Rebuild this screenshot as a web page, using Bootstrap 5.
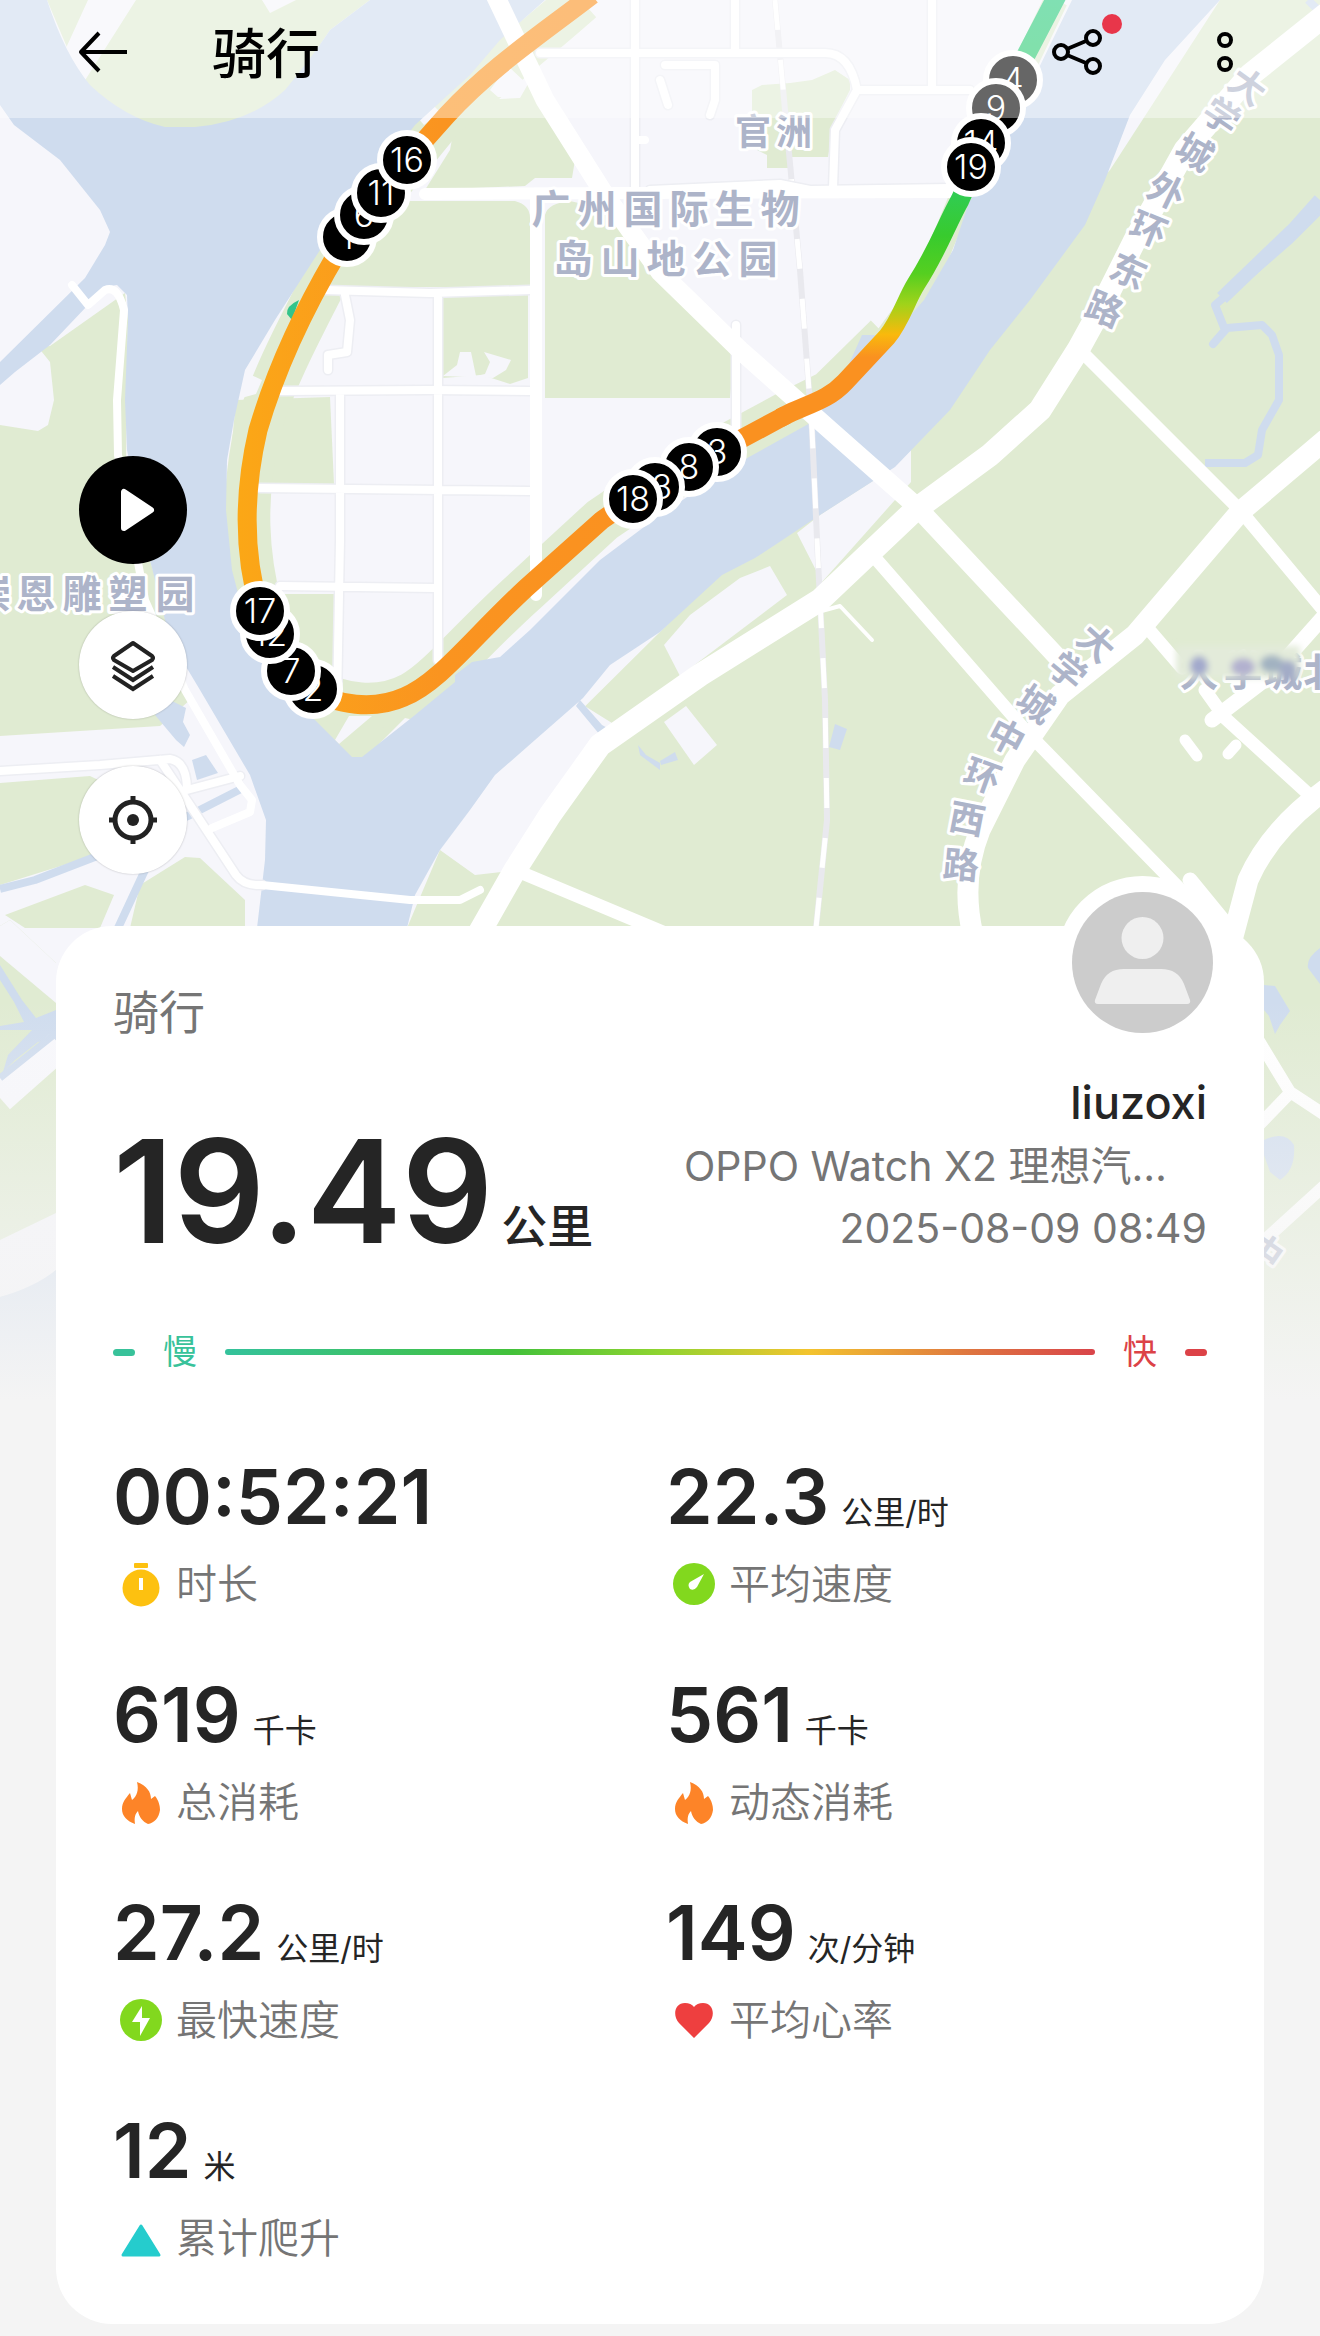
<!DOCTYPE html>
<html lang="zh-CN">
<head>
<meta charset="utf-8">
<meta name="viewport" content="width=device-width, initial-scale=1">
<title>骑行</title>
<link href="https://cdn.jsdelivr.net/npm/bootstrap@5.3.0/dist/css/bootstrap.min.css" rel="stylesheet">
<style>
  body { background: #f4f4f4; color: #252525; font-family: Inter, "Noto Sans CJK SC", sans-serif; }
  .map-canvas { top: 0; left: 0; height: 1400px; }
  .map-canvas text { font-family: Inter, "Noto Sans CJK SC", sans-serif; text-anchor: middle; }
  .place-name { font-size: 39px; font-weight: 700; fill: #adb4c9; stroke: #fff; stroke-width: 6px; stroke-linejoin: round; paint-order: stroke; }
  .street-name { font-size: 36px; font-weight: 600; }
  .km-pin circle { fill: #000; stroke: #fff; stroke-width: 6px; }
  .km-pin text { fill: #fff; font-size: 34px; font-weight: 300; }
  .top-bar { height: 118px; padding: 0 85px 0 77px; background: rgba(255,255,255,.4); }
  .top-title { font-size: 54px; line-height: 64px; font-weight: 500; color: #000; margin-left: 83px; padding-bottom: 8px; }
  .bare-btn { background: none; border: 0; padding: 0; line-height: 0; color: #000; }
  .back-btn { padding-bottom: 14px; }
  .more-btn { margin-left: 89px; }
  .tool-stack { padding: 338px 79px 52px; gap: 47px; }
  .round-btn { width: 108px; height: 108px; border: 0; padding: 0; border-radius: 50%; background: #fff; color: #222; box-shadow: 0 0 2px rgba(0,0,0,.25); line-height: 0; }
  .round-btn.play { background: #000; color: #fff; box-shadow: none; }
  .ride-card { margin: 0 56px 13px; padding: 58px 57px 0; border: 0; border-radius: 56px; background: #fff; color: #252525; }
  .avatar-ring { top: -50px; right: 35px; width: 173px; height: 173px; border: 16px solid #fff; border-radius: 50%; background: #fff; }
  .ride-kind { font-size: 46px; line-height: 56px; color: #757575; }
  .ride-head { margin-top: 31px; }
  .distance { font-size: 143px; line-height: 160px; font-weight: 600; }
  .distance-unit { font-size: 46px; line-height: 56px; font-weight: 500; margin-left: 8px; }
  .meta { padding-bottom: 12px; font-size: 41px; line-height: 62px; color: #757575; }
  .meta-name { font-size: 45px; line-height: 64px; font-weight: 500; color: #252525; }
  .meta-device { padding-right: 40px; }
  .speed-scale { margin-top: 56px; gap: 28px; font-size: 34px; line-height: 50px; }
  .tick { width: 22px; height: 7px; border-radius: 4px; }
  .slow { color: #38c29a; } .fast { color: #dc4247; }
  .tick.slow { background: #38c29a; } .tick.fast { background: #dc4247; }
  .speed-line { height: 6px; border-radius: 3px; background: linear-gradient(90deg, #34c29c, #43c13a 33%, #8fd430 50%, #f3c42e 67%, #de7440 86%, #d9444a); }
  .stat-grid { margin-top: 75px; --bs-gutter-x: 12px; }
  .stat { padding-bottom: 56px; }
  .stat-value { font-size: 75px; line-height: 90px; font-weight: 600; }
  .stat-unit { font-size: 32px; line-height: 40px; font-weight: 400; color: #252525; margin-left: 12px; }
  .stat-label { margin-top: 12px; gap: 7px; font-size: 41px; line-height: 60px; color: #757575; font-weight: 350; }
</style>
</head>
<body>
<main class="position-relative">
<svg class="map-canvas position-absolute w-100" viewBox="0 0 1320 1400" preserveAspectRatio="xMidYMin slice" role="img" aria-label="骑行路线地图">
  <defs>
    <linearGradient id="east" gradientUnits="userSpaceOnUse" x1="0" y1="380" x2="0" y2="0">
      <stop offset="0" stop-color="#fa9120"/><stop offset=".06" stop-color="#fa9120"/><stop offset=".12" stop-color="#f9b90c"/>
      <stop offset=".2" stop-color="#9fd31a"/><stop offset=".28" stop-color="#55cf20"/><stop offset=".38" stop-color="#38cb2e"/>
      <stop offset=".5" stop-color="#30cc55"/><stop offset="1" stop-color="#2ccb80"/>
    </linearGradient>
    <linearGradient id="west" gradientUnits="userSpaceOnUse" x1="240" y1="0" x2="640" y2="0">
      <stop offset="0" stop-color="#fba716"/><stop offset=".1" stop-color="#fba319"/><stop offset=".5" stop-color="#fa9420"/><stop offset="1" stop-color="#fa9120"/>
    </linearGradient>
    <linearGradient id="fade" x1="0" y1="0" x2="0" y2="1">
      <stop offset="0" stop-color="#f4f4f4" stop-opacity="0"/><stop offset=".45" stop-color="#f4f4f4" stop-opacity=".45"/><stop offset="1" stop-color="#f4f4f4"/>
    </linearGradient>
    <filter id="soft" x="-50%" y="-50%" width="200%" height="200%"><feGaussianBlur stdDeviation="3"/></filter>
  </defs>
  <rect width="1320" height="1400" fill="#f6f6fb"/>
  <!-- parks -->
  <g fill="#e0ebd2">
    <path d="M1220 0H1320V1400H475L475 928L407 928L440 850L660 632L1110 170Z"/>
    <path d="M47 0H370L330 30Q310 60 285 95Q250 128 195 132H165Q125 125 85 90Z"/>
    <path d="M50 346L125 293L128 320L126 460L150 560L190 700L160 726L0 736V425L38 431L48 425L54 400L50 362L38 347Z"/>
    <path d="M0 783L90 776L140 800L150 830L80 860L0 885ZM140 885L185 857L200 858L245 900V928H130ZM5 915L85 885L114 895L100 928H25Z"/>
    <path d="M480 100L520 98L528 84L545 105L575 160L572 178L535 178L525 186L425 190L450 150L456 118Z"/>
    <path d="M380 201H515Q530 205 530 218V287L335 287L300 330L340 240Z"/>
    <path d="M545 215Q548 203 570 201L600 208L660 275L735 350L730 398H545Z"/>
    <path d="M443 297L528 295V378L510 384L482 375L443 378Z"/>
    <path d="M236 400L330 397L334 484H228Z"/>
    <path d="M270 594H334V690L460 680V700L362 760H350L300 710Z"/>
    <path d="M752 90L762 85L790 83L812 80L835 70L850 80L850 90L835 120L828 157H788V168H767V155L757 150L752 115Z"/>
    <path d="M0 926L10 920L56 963V1400H0Z"/>
  </g>
  <path d="M581 0C530 45 485 80 442 117L407 160L347 237C310 310 270 380 255 440C244 500 244 550 260 611C270 640 290 668 313 689C340 708 380 712 412 695C440 680 470 640 526 590L602 520L633 499L717 452L786 415L830 393L887 337" fill="none" stroke="#e0ebd2" stroke-width="46"/>
  <path d="M887 337L925 285L960 200L1056 0" fill="none" stroke="#e0ebd2" stroke-width="24"/>
  <!-- bare ground along the banks -->
  <g fill="#f6f6fb">
    <path d="M88 0H136L82 85L66 48ZM262 0L270 13L296 0Z"/>
    <path d="M797 533L820 515L890 470L911 450V482L822 582ZM664 645L690 615L740 578L770 566L787 595L680 676ZM415 860L495 775L575 700L620 728L580 790L520 870L475 875L440 850ZM664 722L686 706L717 745L694 765Z"/>
    <path d="M418 118L434 106L440 112L424 125ZM234 400L245 372L262 380L256 394ZM443 376L457 365L460 352L471 352L476 376L485 374L490 362L484 352L511 360L506 370L493 378Z"/>
    <path d="M490 90L498 97H516L527 84L508 66ZM349 716L372 716L339 744L335 740ZM405 718L414 720L366 757Z"/>
    <path d="M0 926L10 920L56 963V1003L0 956Z"/>
  </g>
  <!-- river -->
  <g fill="#cfdcee">
    <path d="M0 0H47Q65 55 90 85Q125 118 165 127H195Q250 122 285 90Q310 60 330 30L370 0H545L500 40L470 75L415 125L320 250L275 320L245 370L234 420L227 460L226 510L232 570L245 620L275 690L315 720L352 757H362L415 715L455 682V675L472 662L500 657L530 630L600 560L660 515L740 462L812 422L830 400L848 366L862 335H893L924 300L953 250L968 205L1000 140L1033 80L1072 0H1220L1165 60L1130 115L1105 180L1085 225L1030 300L990 350L950 410L895 467L820 515L775 545L755 558L722 575L660 632L610 665L583 698L535 740L495 775L470 810L440 850L415 895L407 928H257L265 860L266 820L250 775L200 690L170 640L160 600L150 560L127 450L125 400L128 320L127 295L117 285L104 287L88 305L50 345L15 372L0 385V362L85 278L105 245L110 232L100 210L60 160L14 125L0 105Z"/>
    <path d="M155 715L170 700L186 708L183 722L190 735L184 747L176 740ZM192 760L206 755L218 773L197 780Z"/>
    <path d="M580 700L602 725L620 735L616 742L600 735L576 706ZM638 745L646 755L660 763V770L640 755Z"/>
    <path d="M835 724L847 729L840 750L829 747ZM660 761L675 752L678 760L661 765Z"/>
    <path d="M1320 948Q1306 958 1308 968L1320 984ZM1264 985L1275 986L1290 1011L1280 1025L1275 1034L1269 1016L1264 1010ZM1264 1140Q1285 1130 1294 1145Q1296 1170 1280 1180L1270 1172L1264 1155Z"/>
    <path d="M0 965L22 1000L36 1018L56 1010V1040L38 1042L15 1060L3 1072L8 1055L32 1030L0 1030V1026L24 1022L14 1002L0 980Z"/>
  </g>
  <g fill="none" stroke="#cfdcee" stroke-width="8" stroke-linejoin="round">
    <path d="M1320 210L1290 240L1215 305L1225 330L1213 344L1227 328L1262 325L1272 335L1279 355V400L1262 430L1258 455L1245 463H1205"/>
    <path d="M1320 200L1295 228L1222 298" stroke-width="14"/>
    <path d="M0 889L35 880L100 855L190 815L243 788M145 870L118 928M1308 0L1320 12"/>
  </g>
  <path d="M0 1098L60 1045" stroke="#f8f8fc" stroke-width="30"/><path d="M0 1078L60 1030" stroke="#cfdcee" stroke-width="7"/>
  <!-- railway -->
  <path d="M775 0L785 110L800 270L812 430L818 560L825 700L827 820L816 928" fill="none" stroke="#e9e9ee" stroke-width="6"/>
  <path d="M775 0L785 110L800 270L812 430L818 560L825 700L827 820L816 928" fill="none" stroke="#fff" stroke-width="5" stroke-dasharray="30 30"/>
  <!-- streets, the narrow ones over a faint kerb -->
  <g fill="none" stroke-linejoin="round" stroke-linecap="round">
    <g stroke="#edeef3" stroke-width="11">
      <path d="M540 53H825Q850 53 857 90L835 130L833 188M735 0V53M932 0V90M857 90H970M635 0V190M650 190L780 184L810 190L950 188M325 290L430 293L530 290M280 391L430 390L530 391M260 488L530 491M280 586L435 588M438 295V660M340 395V540L337 705M345 295L350 320L347 352L328 355L328 370M736 325V430M665 65H715V100L710 115M660 80L668 105"/>
      <path d="M0 771L100 765L170 759Q187 762 187 790L240 776M160 760L190 805L236 875Q244 886 262 885"/>
    </g>
    <g stroke="#fff">
      <path stroke-width="8" d="M540 53H825Q850 53 857 90L835 130L833 188M735 0V53M932 0V90M857 90H970M635 0V190M650 190L780 184L810 190L950 188M325 290L430 293L530 290M280 391L430 390L530 391M260 488L530 491M280 586L435 588M438 295V660M340 395V540L337 705M345 295L350 320L347 352L328 355L328 370M736 325V430M665 65H715V100L710 115M660 80L668 105M635 140H645"/>
      <path stroke-width="8" d="M72 285L88 305L105 290Q118 285 124 310L117 400L118 455L145 600L185 690L240 785L252 800L250 812L212 828M0 771L100 765L170 759Q187 762 187 790L240 776M160 760L190 805L236 875Q244 886 262 885L410 900L460 900L480 890"/>
      <path stroke-width="12" d="M425 194L640 193L950 192M536 195V595M1245 1018L1290 1092L1325 1115M1258 1126L1288 1095M1258 1246L1325 1185"/>
      <path stroke-width="13" d="M870 552L1025 730L1215 925M1080 350L1240 510L1325 612M1145 625L1182 668M1205 690L1225 718L1315 800M515 870L670 935"/>
      <path stroke-width="19" d="M495 -5L545 100L605 195L660 272L740 350L830 430L915 505L1060 660"/>
      <path stroke-width="23" d="M1325 15L1250 75L1185 150L1135 240L1100 310L1078 350L1040 410L990 455L915 510L820 600L700 675L600 745L550 815L515 870L478 935"/>
      <path stroke-width="21" d="M1325 440L1240 512L1135 635L1060 695L1015 760L980 830Q960 880 973 935M1325 790Q1270 830 1248 880L1232 940"/>
      <path stroke-width="15" d="M1325 615L1285 660M1262 682L1212 720M1190 880L1235 935"/>
      <path stroke-width="11" d="M1185 740L1197 756M1236 745L1228 754"/>
      <path stroke-width="4" d="M818 612L840 606L872 640"/>
    </g>
  </g>
  <path d="M0 1240L56 1213V1270Q35 1290 0 1297Z" fill="#f6f6fb"/><path d="M0 1297Q35 1287 56 1270V1400H0Z" fill="#cfdcee"/>
  <!-- place and street names -->
  <g class="place-name">
    <text y="145" x="753 794" font-size="36">官洲</text>
    <text y="223" x="551 597 643 689 734 780">广州国际生物</text>
    <text y="273" x="573 620 666 712 758">岛山地公园</text>
    <text y="608" x="-8 36 82 128 175">崇恩雕塑园</text>
    <text y="686" x="1199 1243 1283 1323">大学城北</text>
  </g>
  <g class="place-name street-name">
    <text transform="translate(1247 87) rotate(36)" y="12">大</text><text transform="translate(1221 117) rotate(34)" y="12">学</text>
    <text transform="translate(1194 153) rotate(30)" y="12">城</text><text transform="translate(1166 192) rotate(26)" y="12">外</text>
    <text transform="translate(1148 230) rotate(22)" y="12">环</text><text transform="translate(1128 272) rotate(24)" y="12">东</text>
    <text transform="translate(1104 310) rotate(22)" y="12">路</text>
    <text transform="translate(1096 644) rotate(42)" y="12">大</text><text transform="translate(1067 672) rotate(40)" y="12">学</text>
    <text transform="translate(1035 705) rotate(34)" y="12">城</text><text transform="translate(1006 738) rotate(28)" y="12">中</text>
    <text transform="translate(982 777) rotate(20)" y="12">环</text><text transform="translate(967 820) rotate(11)" y="12">西</text>
    <text transform="translate(961 866) rotate(5)" y="12">路</text><text transform="translate(1264 1252) rotate(35)" y="12">中</text>
  </g>
  <g filter="url(#soft)">
    <path d="M1176 646H1300V678H1176Z" fill="#e3ebda"/>
    <g opacity=".95"><ellipse cx="1199" cy="666" rx="9" ry="10" fill="#9fa6cc"/><ellipse cx="1243" cy="667" rx="12" ry="9" fill="#b0aecf"/>
    <ellipse cx="1272" cy="664" rx="12" ry="9" fill="#9fb0c0"/><ellipse cx="1288" cy="671" rx="9" ry="11" fill="#a0a9c6"/></g>
  </g>
  <!-- recorded route -->
  <path d="M299 300Q286 306 287 314L292 320Z" fill="#33c48a"/>
  <g fill="none" stroke-width="19" stroke-linejoin="round">
    <path stroke="url(#west)" d="M592 -5C540 35 490 68 447 115L407 160L347 237C305 305 275 372 258 430C244 490 242 550 260 611C270 640 290 668 313 689C335 706 375 710 404 697C440 682 470 640 526 588L602 520L633 499L717 452L786 415"/>
    <path stroke="url(#east)" d="M780 418L790 413C815 402 830 398 845 382L887 337C901 320 906 300 916 284C938 250 946 225 960 200L1013 80L1060 -10"/>
  </g>
  <g class="km-pin">
    <circle cx="347" cy="237" r="27"/><text x="347" y="249">1</text>
    <circle cx="364" cy="215" r="27"/><text x="364" y="227">6</text>
    <circle cx="381" cy="193" r="27"/><text x="381" y="205">11</text>
    <circle cx="407" cy="160" r="27"/><text x="407" y="172">16</text>
    <circle cx="313" cy="689" r="27"/><text x="313" y="701">2</text>
    <circle cx="291" cy="671" r="27"/><text x="291" y="683">7</text>
    <circle cx="270" cy="634" r="27"/><text x="270" y="646">12</text>
    <circle cx="260" cy="611" r="27"/><text x="260" y="623">17</text>
    <circle cx="717" cy="452" r="27"/><text x="717" y="464">3</text>
    <circle cx="689" cy="467" r="27"/><text x="689" y="479">8</text>
    <circle cx="655" cy="487" r="27"/><text x="655" y="499">13</text>
    <circle cx="633" cy="499" r="27"/><text x="633" y="511">18</text>
    <circle cx="1013" cy="80" r="27"/><text x="1013" y="92">4</text>
    <circle cx="996" cy="108" r="27"/><text x="996" y="120">9</text>
    <circle cx="981" cy="143" r="27"/><text x="981" y="155">14</text>
    <circle cx="971" cy="167" r="27"/><text x="971" y="179">19</text>
  </g>
  <rect y="1000" width="1320" height="400" fill="url(#fade)"/>
</svg>

<header class="top-bar position-relative d-flex align-items-center">
  <button class="bare-btn back-btn" type="button" aria-label="返回">
    <svg width="52" height="44" viewBox="0 0 52 44" fill="none" stroke="currentColor" stroke-width="4"><path d="M50 22H4M22 3L4 22L22 41" stroke-linejoin="round"/></svg>
  </button>
  <h1 class="top-title mb-0">骑行</h1>
  <button class="bare-btn ms-auto" type="button" aria-label="分享">
    <svg width="76" height="90" viewBox="0 0 76 90" fill="none" stroke="currentColor" stroke-width="4">
      <circle cx="11" cy="38" r="7"/><circle cx="43" cy="24" r="7"/><circle cx="43" cy="52" r="7"/><path d="M17 35L36 27M17 41L36 49"/>
      <circle cx="62" cy="10" r="10" fill="#e8364a" stroke="none"/>
    </svg>
  </button>
  <button class="bare-btn more-btn" type="button" aria-label="更多">
    <svg width="20" height="60" viewBox="0 0 20 60" fill="none" stroke="currentColor" stroke-width="4"><circle cx="10" cy="11" r="6"/><circle cx="10" cy="35" r="6"/></svg>
  </button>
</header>

<nav class="tool-stack position-relative d-flex flex-column" aria-label="地图工具">
  <button class="round-btn play" type="button" aria-label="播放轨迹"><svg width="108" height="108" viewBox="0 0 108 108"><path d="M45 36V72L72 54Z" fill="#fff" stroke="#fff" stroke-width="6" stroke-linejoin="round"/></svg></button>
  <button class="round-btn" type="button" aria-label="图层"><svg width="108" height="108" viewBox="0 0 108 108" fill="none" stroke="currentColor" stroke-width="4"><path d="M54 32L73 45Q75 47 73 49L54 60L35 49Q33 47 35 45Z" stroke-linejoin="round"/><path d="M34 56L54 69L74 56M34 65L54 78L74 65"/></svg></button>
  <button class="round-btn" type="button" aria-label="定位"><svg width="108" height="108" viewBox="0 0 108 108" fill="none" stroke="currentColor" stroke-width="5"><circle cx="54" cy="54" r="18"/><circle cx="54" cy="54" r="6" fill="currentColor" stroke="none"/><path d="M54 30V38M54 70V78M30 54H38M70 54H78"/></svg></button>
</nav>

<section class="ride-card card position-relative">
  <div class="avatar-ring position-absolute">
    <svg width="141" height="141" viewBox="0 0 141 141" role="img" aria-label="头像"><circle cx="70.5" cy="70.5" r="70.5" fill="#ccc"/><circle cx="70.5" cy="46" r="21" fill="#efefef"/><path d="M26 112Q22 112 23 108L29 92Q35 77 52 77H89Q106 77 112 92L118 108Q119 112 115 112Z" fill="#efefef"/></svg>
  </div>
  <div class="ride-kind">骑行</div>
  <div class="ride-head d-flex justify-content-between align-items-end">
    <div class="d-flex align-items-baseline text-nowrap"><span class="distance">19.49</span><span class="distance-unit">公里</span></div>
    <div class="meta text-end text-nowrap">
      <div class="meta-name">liuzoxi</div>
      <div class="meta-device">OPPO Watch X2 理想汽…</div>
      <div>2025-08-09 08:49</div>
    </div>
  </div>
  <div class="speed-scale d-flex align-items-center">
    <span class="tick slow"></span><span class="slow">慢</span>
    <div class="speed-line flex-grow-1"></div>
    <span class="fast">快</span><span class="tick fast"></span>
  </div>
  <div class="stat-grid row">
    <div class="col-6 stat">
      <div class="d-flex align-items-baseline"><span class="stat-value">00:52:21</span></div>
      <div class="stat-label d-flex align-items-center"><svg width="56" height="56" viewBox="0 0 56 56" fill="#fdc110"><rect x="21" y="7" width="14" height="5" rx="1"/><circle cx="28" cy="32" r="18.5"/><path d="M28 22V34" stroke="#fff" stroke-width="4"/></svg>时长</div>
    </div>
    <div class="col-6 stat">
      <div class="d-flex align-items-baseline"><span class="stat-value">22.3</span><span class="stat-unit">公里/时</span></div>
      <div class="stat-label d-flex align-items-center"><svg width="56" height="56" viewBox="0 0 56 56"><circle cx="28" cy="28" r="21" fill="#82d81e"/><path d="M38 18L24 26Q21 29 24 33Q28 35 31 31Z" fill="#fff"/></svg>平均速度</div>
    </div>
    <div class="col-6 stat">
      <div class="d-flex align-items-baseline"><span class="stat-value">619</span><span class="stat-unit">千卡</span></div>
      <div class="stat-label d-flex align-items-center"><svg width="56" height="56" viewBox="0 0 56 56" fill="#fd8428"><path d="M24 8C34 12 38 18 38 25L42 22C46 27 47 32 47 36C46 44 41 49 35 50C30 48 26 43 25 37C22 40 21 44 22 50C14 47 9 42 9 35C9 28 13 24 17 19L19 26C24 22 26 16 24 8Z"/></svg>总消耗</div>
    </div>
    <div class="col-6 stat">
      <div class="d-flex align-items-baseline"><span class="stat-value">561</span><span class="stat-unit">千卡</span></div>
      <div class="stat-label d-flex align-items-center"><svg width="56" height="56" viewBox="0 0 56 56" fill="#fd8428"><path d="M24 8C34 12 38 18 38 25L42 22C46 27 47 32 47 36C46 44 41 49 35 50C30 48 26 43 25 37C22 40 21 44 22 50C14 47 9 42 9 35C9 28 13 24 17 19L19 26C24 22 26 16 24 8Z"/></svg>动态消耗</div>
    </div>
    <div class="col-6 stat">
      <div class="d-flex align-items-baseline"><span class="stat-value">27.2</span><span class="stat-unit">公里/时</span></div>
      <div class="stat-label d-flex align-items-center"><svg width="56" height="56" viewBox="0 0 56 56"><circle cx="28" cy="28" r="21" fill="#82d81e"/><path d="M29 14L19 30H27V44L37 26H29Z" fill="#fff"/></svg>最快速度</div>
    </div>
    <div class="col-6 stat">
      <div class="d-flex align-items-baseline"><span class="stat-value">149</span><span class="stat-unit">次/分钟</span></div>
      <div class="stat-label d-flex align-items-center"><svg width="56" height="56" viewBox="0 0 56 56" fill="#ee3f3f"><path d="M28 46L13 31C6 23 9 11 19 11Q25 11 28 15Q31 11 37 11C47 11 50 23 43 31Z"/></svg>平均心率</div>
    </div>
    <div class="col-6 stat">
      <div class="d-flex align-items-baseline"><span class="stat-value">12</span><span class="stat-unit">米</span></div>
      <div class="stat-label d-flex align-items-center"><svg width="56" height="56" viewBox="0 0 56 56" fill="#25cccd"><path d="M28 16L46 45H10Z" stroke="#25cccd" stroke-width="3" stroke-linejoin="round"/></svg>累计爬升</div>
    </div>
  </div>
</section>
</main>
<script src="https://cdn.jsdelivr.net/npm/bootstrap@5.3.0/dist/js/bootstrap.bundle.min.js"></script>
</body>
</html>
